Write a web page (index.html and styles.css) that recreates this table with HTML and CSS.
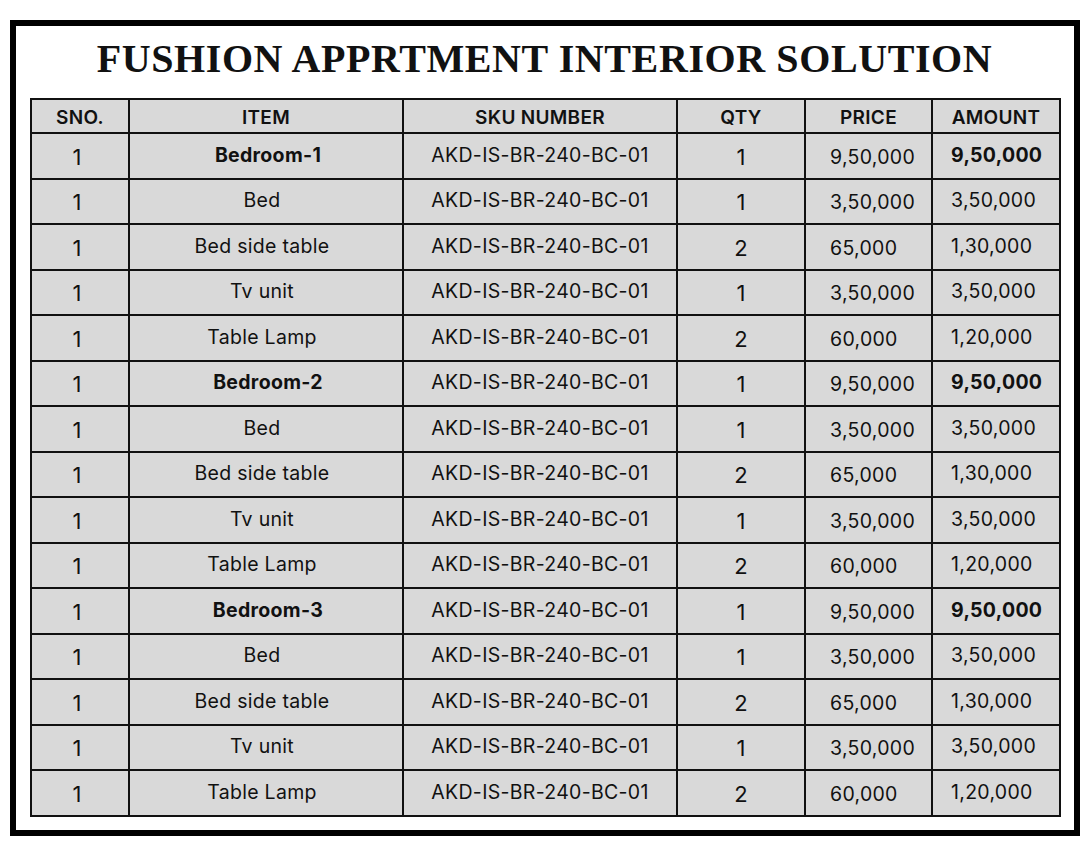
FILE: index.html
```html
<!DOCTYPE html>
<html>
<head>
<meta charset="utf-8">
<link rel="stylesheet" href="styles.css">
</head>
<body>
<div class="frame">
  <h1 class="title">FUSHION APPRTMENT INTERIOR SOLUTION</h1>
  <table class="grid">
    <colgroup>
      <col class="c-sno"><col class="c-item"><col class="c-sku"><col class="c-qty"><col class="c-price"><col class="c-amt">
    </colgroup>
    <thead>
      <tr><th>SNO.</th><th>ITEM</th><th>SKU NUMBER</th><th>QTY</th><th>PRICE</th><th>AMOUNT</th></tr>
    </thead>
    <tbody>
      <tr class="group"><td class="sno">1</td><td class="item">Bedroom-1</td><td class="sku">AKD-IS-BR-240-BC-01</td><td class="qty">1</td><td class="price">9,50,000</td><td class="amt">9,50,000</td></tr>
      <tr><td class="sno">1</td><td class="item">Bed</td><td class="sku">AKD-IS-BR-240-BC-01</td><td class="qty">1</td><td class="price">3,50,000</td><td class="amt">3,50,000</td></tr>
      <tr><td class="sno">1</td><td class="item">Bed side table</td><td class="sku">AKD-IS-BR-240-BC-01</td><td class="qty">2</td><td class="price">65,000</td><td class="amt">1,30,000</td></tr>
      <tr><td class="sno">1</td><td class="item">Tv unit</td><td class="sku">AKD-IS-BR-240-BC-01</td><td class="qty">1</td><td class="price">3,50,000</td><td class="amt">3,50,000</td></tr>
      <tr><td class="sno">1</td><td class="item">Table Lamp</td><td class="sku">AKD-IS-BR-240-BC-01</td><td class="qty">2</td><td class="price">60,000</td><td class="amt">1,20,000</td></tr>
      <tr class="group"><td class="sno">1</td><td class="item">Bedroom-2</td><td class="sku">AKD-IS-BR-240-BC-01</td><td class="qty">1</td><td class="price">9,50,000</td><td class="amt">9,50,000</td></tr>
      <tr><td class="sno">1</td><td class="item">Bed</td><td class="sku">AKD-IS-BR-240-BC-01</td><td class="qty">1</td><td class="price">3,50,000</td><td class="amt">3,50,000</td></tr>
      <tr><td class="sno">1</td><td class="item">Bed side table</td><td class="sku">AKD-IS-BR-240-BC-01</td><td class="qty">2</td><td class="price">65,000</td><td class="amt">1,30,000</td></tr>
      <tr><td class="sno">1</td><td class="item">Tv unit</td><td class="sku">AKD-IS-BR-240-BC-01</td><td class="qty">1</td><td class="price">3,50,000</td><td class="amt">3,50,000</td></tr>
      <tr><td class="sno">1</td><td class="item">Table Lamp</td><td class="sku">AKD-IS-BR-240-BC-01</td><td class="qty">2</td><td class="price">60,000</td><td class="amt">1,20,000</td></tr>
      <tr class="group"><td class="sno">1</td><td class="item">Bedroom-3</td><td class="sku">AKD-IS-BR-240-BC-01</td><td class="qty">1</td><td class="price">9,50,000</td><td class="amt">9,50,000</td></tr>
      <tr><td class="sno">1</td><td class="item">Bed</td><td class="sku">AKD-IS-BR-240-BC-01</td><td class="qty">1</td><td class="price">3,50,000</td><td class="amt">3,50,000</td></tr>
      <tr><td class="sno">1</td><td class="item">Bed side table</td><td class="sku">AKD-IS-BR-240-BC-01</td><td class="qty">2</td><td class="price">65,000</td><td class="amt">1,30,000</td></tr>
      <tr><td class="sno">1</td><td class="item">Tv unit</td><td class="sku">AKD-IS-BR-240-BC-01</td><td class="qty">1</td><td class="price">3,50,000</td><td class="amt">3,50,000</td></tr>
      <tr><td class="sno">1</td><td class="item">Table Lamp</td><td class="sku">AKD-IS-BR-240-BC-01</td><td class="qty">2</td><td class="price">60,000</td><td class="amt">1,20,000</td></tr>
    </tbody>
  </table>
</div>
</body>
</html>
```
FILE: styles.css
```css
html, body {
  margin: 0;
  padding: 0;
  background: #ffffff;
}
body {
  padding: 20px 10px 0 10px;
  font-family: "Inter", "Open Sans", sans-serif;
  color: #111;
}
.frame {
  width: 1070px;
  height: 816px;
  box-sizing: border-box;
  border: 6px solid #000;
  padding: 0 15px 0 14px;
  background: #fff;
}
.title {
  margin: 0;
  height: 72px;
  line-height: 66px;
  text-align: center;
  font-family: "Liberation Serif", "DejaVu Serif", serif;
  font-weight: 700;
  font-size: 40px;
  letter-spacing: 0.6px;
  color: #111;
}
.grid {
  width: 1029px;
  border-collapse: collapse;
  table-layout: fixed;
  background: #d9d9d9;
  border: 2px solid #000;
}
.c-sno { width: 98px; }
.c-item { width: 274px; }
.c-sku { width: 274px; }
.c-qty { width: 128px; }
.c-price { width: 127px; }
.c-amt { width: 128px; }
.grid thead tr { height: 34px; }
.grid tbody tr { height: 45.5px; }
.grid th, .grid td {
  border: 2px solid #111;
  padding: 0;
  text-align: center;
  vertical-align: middle;
  line-height: 20px;
  white-space: nowrap;
}
.grid th {
  font-size: 19px;
  font-weight: 600;
  letter-spacing: 0.3px;
  padding-top: 4px;
}
.grid td {
  font-size: 19.5px;
  font-weight: 400;
  letter-spacing: 0.3px;
}
.grid td.sno, .grid td.qty {
  font-size: 22px;
  padding-top: 2px;
}
.grid td.sno { padding-right: 6px; }
.grid td.item { padding-right: 8px; padding-bottom: 2px; }
.group td.item { padding-right: 0; padding-left: 4px; }
.grid td.sku { padding-bottom: 2px; }
.grid td.price { text-align: left; padding-left: 24px; padding-top: 2px; }
.grid td.amt { text-align: left; padding-left: 18px; padding-bottom: 2px; }
.group td.item, .group td.amt { font-weight: 700; }
```
